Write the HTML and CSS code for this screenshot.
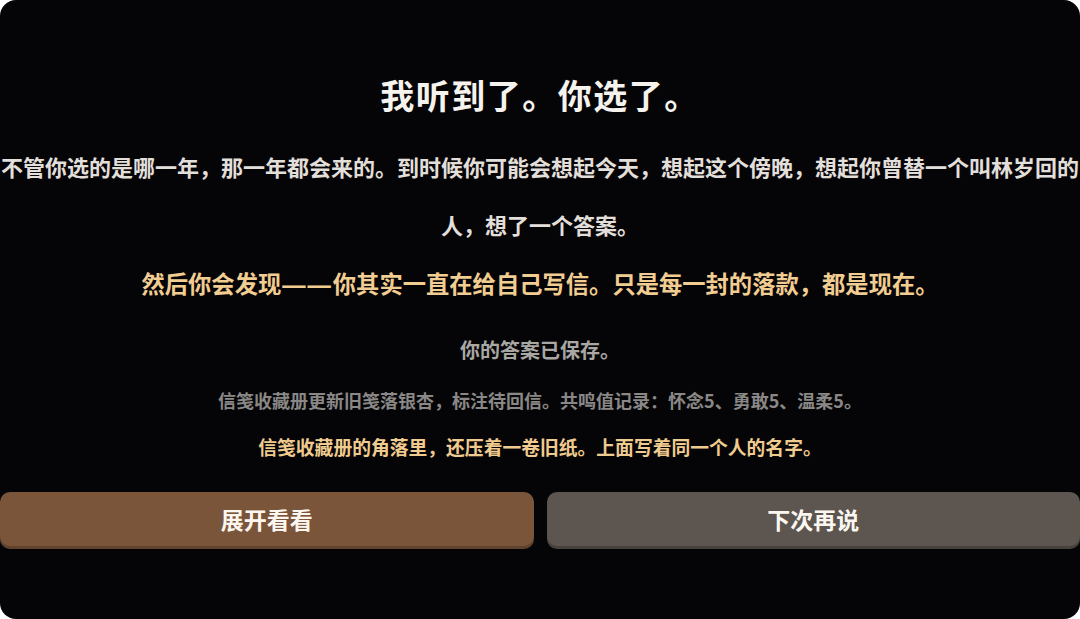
FILE: index.html
```html
<!DOCTYPE html>
<html lang="zh-CN">
<head>
<meta charset="utf-8">
<title>我听到了。你选了。</title>
<link rel="stylesheet" href="styles.css">
</head>
<body>
<main class="panel">
  <h1 class="title">我听到了。你选了。</h1>
  <p class="story">不管你选的是哪一年，那一年都会来的。到时候你可能会想起今天，想起这个傍晚，想起你曾替一个叫林岁回的人，想了一个答案。</p>
  <p class="reveal">然后你会发现<span class="dash">——</span>你其实一直在给自己写信。只是每一封的落款，都是现在。</p>
  <p class="saved">你的答案已保存。</p>
  <p class="record">信笺收藏册更新旧笺落银杏，标注待回信。共鸣值记录：怀念5、勇敢5、温柔5。</p>
  <p class="hint">信笺收藏册的角落里，还压着一卷旧纸。上面写着同一个人的名字。</p>
  <div class="actions">
    <button class="btn btn-primary" type="button">展开看看</button>
    <button class="btn btn-secondary" type="button">下次再说</button>
  </div>
</main>
</body>
</html>
```

FILE: styles.css
```css
html, body {
  margin: 0;
  padding: 0;
  background: #ffffff;
}

body {
  font-family: "Noto Sans CJK SC", "Noto Sans", sans-serif;
  font-weight: 700;
}

.panel {
  box-sizing: border-box;
  width: 1080px;
  height: 619px;
  background: #050507;
  border-radius: 16px;
  padding-top: 71px;
  display: flex;
  flex-direction: column;
  align-items: stretch;
  text-align: center;
  overflow: hidden;
}

.title {
  margin: 0;
  font-size: 34px;
  line-height: 48px;
  letter-spacing: 1.5px;
  color: #f6f3ee;
  font-weight: 700;
}

.story {
  margin: 18px 0 0;
  font-size: 22px;
  line-height: 58px;
  color: #e2dfda;
}

.reveal {
  margin: 1px 0 0;
  font-size: 23.3px;
  line-height: 58px;
  color: #f2cd92;
}

.dash {
  font-family: "Liberation Sans", sans-serif;
  letter-spacing: 2px;
  padding-left: 1px;
}

.saved {
  margin: 16px 0 0;
  font-size: 20px;
  line-height: 40px;
  color: #a9a7a4;
}

.record {
  margin: 10px 0 0;
  font-size: 18px;
  line-height: 40px;
  color: #8a8886;
}

.hint {
  margin: 7px 0 0;
  font-size: 18.8px;
  line-height: 40px;
  color: #f0cb90;
}

.actions {
  margin-top: 25px;
  display: flex;
  gap: 13px;
}

.btn {
  flex: 1;
  height: 57px;
  border: none;
  border-radius: 10px;
  font-family: inherit;
  font-weight: 700;
  font-size: 23px;
  line-height: 1;
  padding: 0 0 3px;
  color: #fbf7f0;
  box-shadow: inset 0 -3px 0 rgba(0, 0, 0, 0.22);
  cursor: pointer;
}

.btn-primary {
  background: #7b553a;
}

.btn-secondary {
  background: #5d554f;
}
```
